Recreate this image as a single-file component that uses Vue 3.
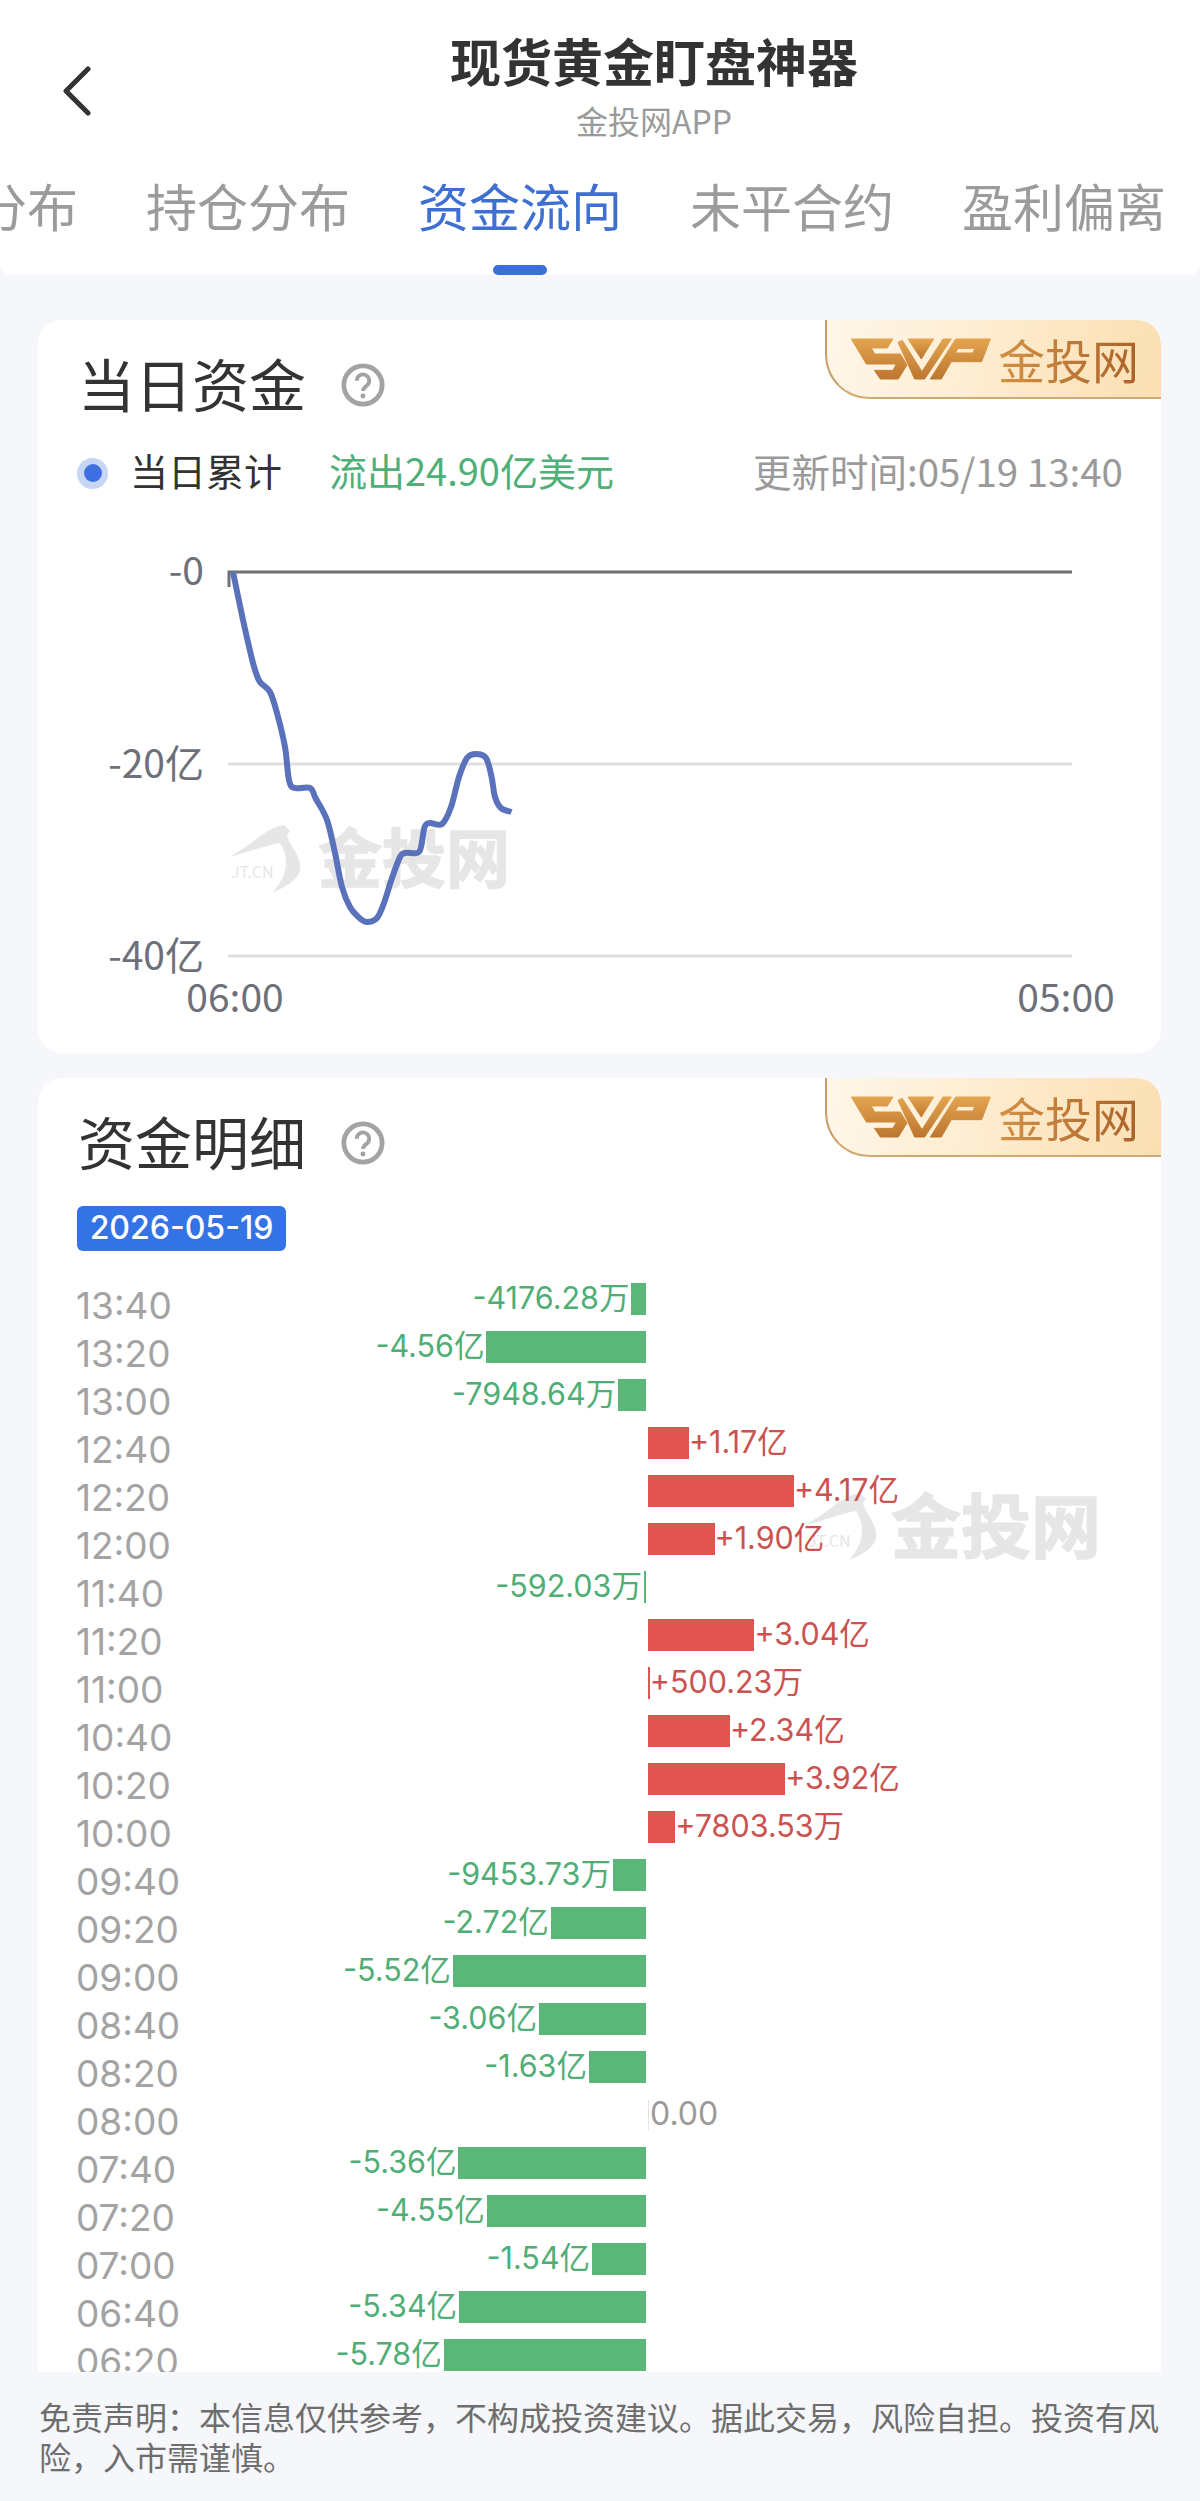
<script setup>
import { computed } from 'vue';

const tabs = [
  { name: '分布' },
  { name: '持仓分布' },
  { name: '资金流向', active: true },
  { name: '未平合约' },
  { name: '盈利偏离' },
];

const flowRows = [
  ['13:40', -4176.28, '万'], ['13:20', -4.56, '亿'], ['13:00', -7948.64, '万'],
  ['12:40', 1.17, '亿'], ['12:20', 4.17, '亿'], ['12:00', 1.9, '亿'],
  ['11:40', -592.03, '万'], ['11:20', 3.04, '亿'], ['11:00', 500.23, '万'],
  ['10:40', 2.34, '亿'], ['10:20', 3.92, '亿'], ['10:00', 7803.53, '万'],
  ['09:40', -9453.73, '万'], ['09:20', -2.72, '亿'], ['09:00', -5.52, '亿'],
  ['08:40', -3.06, '亿'], ['08:20', -1.63, '亿'], ['08:00', 0, ''],
  ['07:40', -5.36, '亿'], ['07:20', -4.55, '亿'], ['07:00', -1.54, '亿'],
  ['06:40', -5.34, '亿'], ['06:20', -5.78, '亿'],
];

// 35px per 亿
const rows = computed(() => flowRows.map(([time, val, unit]) => {
  const yi = unit === '万' ? val / 10000 : val;
  const sign = val > 0 ? '+' : '';
  return {
    time,
    val,
    width: Math.abs(yi) * 35,
    label: val === 0 ? '0.00' : `${sign}${val.toFixed(2)}${unit}`,
  };
}));

const points = [
  [233, 572], [243, 620], [251, 655], [255, 670], [260, 682], [270, 692], [277, 713], [285, 747],
  [289, 780], [294.5, 788], [310, 788], [315.5, 798], [327, 820], [335, 853], [342, 887],
  [350, 907], [359.5, 918], [367, 922], [377, 918], [384, 903], [392, 878], [400, 857],
  [405.5, 853], [417, 853], [421, 847], [424.6, 827], [430, 823], [442, 824], [451, 807],
  [459, 777], [467, 758], [476, 754], [486, 758], [491.6, 777], [495, 797], [501, 808], [511.5, 812],
];

const linePath = computed(() => {
  let d = `M${points[0][0]} ${points[0][1]}`;
  for (let i = 0; i < points.length - 1; i++) {
    const p0 = points[i - 1] || points[i];
    const p1 = points[i];
    const p2 = points[i + 1];
    const p3 = points[i + 2] || p2;
    const c1x = p1[0] + (p2[0] - p0[0]) / 6;
    const c1y = p1[1] + (p2[1] - p0[1]) / 6;
    const c2x = p2[0] - (p3[0] - p1[0]) / 6;
    const c2y = p2[1] - (p3[1] - p1[1]) / 6;
    d += ` C${c1x.toFixed(1)} ${c1y.toFixed(1)} ${c2x.toFixed(1)} ${c2y.toFixed(1)} ${p2[0]} ${p2[1]}`;
  }
  return d;
});
</script>

<template>
  <div class="page">
    <header class="header">
      <div class="head-row">
        <div class="back">
          <svg width="30" height="50" viewBox="0 0 30 50">
            <path d="M26 3 L4 25 L26 47" fill="none" stroke="#333" stroke-width="5" stroke-linecap="round" stroke-linejoin="round" />
          </svg>
        </div>
        <div class="head-title">
          <div class="title">现货黄金盯盘神器</div>
          <div class="subtitle">金投网APP</div>
        </div>
      </div>
      <nav class="tabs">
        <div v-for="t in tabs" :key="t.name" class="tab" :class="{ active: t.active }">
          {{ t.name }}
          <i v-if="t.active" class="tab-bar"></i>
        </div>
      </nav>
    </header>

    <main class="main">
      <section class="card day-card">
        <div class="svip">
          <svg class="svp" width="155" height="60" viewBox="0 0 465 180">
            <defs>
              <linearGradient id="svpGold" x1="0" y1="0" x2="0" y2="1">
                <stop offset="0" stop-color="#e3a44e" />
                <stop offset="1" stop-color="#bd7630" />
              </linearGradient>
            </defs>
            <g fill="url(#svpGold)" stroke="url(#svpGold)" stroke-width="3">
              <path d="M25 30 L150 30 L133 57 L85 57 L95 75 L172 75 L192 108 L166 150 L112 150 L94 124 L150 124 L160 105 L70 105 Z" />
              <path d="M195 30 L272 30 L235 90 Z" />
              <path d="M165 40 L178 34 L237 128 L300 30 L325 30 L245 150 L215 150 Z" />
              <path fill-rule="evenodd" d="M338 30 L442 30 L416 98 L325 98 L295 150 L262 150 Z M345 58 L395 58 L390 72 L337 72 Z" />
            </g>
          </svg>
          <span class="svip-text">金投网</span>
        </div>
        <div class="card-title">
          <h2>当日资金</h2>
          <svg class="help" width="44" height="44" viewBox="0 0 46 46">
            <circle cx="23" cy="23" r="20" fill="none" stroke="#a3a3a3" stroke-width="5" />
            <path d="M16.5 18.5a6.5 6.5 0 1 1 10.4 5.2c-2.4 1.8-3.9 2.8-3.9 5.6" fill="none" stroke="#a3a3a3" stroke-width="4" />
            <circle cx="23" cy="34.5" r="2.6" fill="#a3a3a3" />
          </svg>
        </div>
        <div class="legend">
          <span class="dot"><i></i></span>
          <span class="legend-name">当日累计</span>
          <span class="legend-val">流出24.90亿美元</span>
          <span class="legend-time">更新时间:05/19 13:40</span>
        </div>
        <svg class="chart" width="1123" height="533" viewBox="38 520 1123 533">
          <g fill="#e6e6e6">
            <path transform="translate(227 825)" d="M57 0 C40 2 25 20 2 32 C20 28 40 20 53 18 C62 30 62 50 46 67 C65 60 75 50 73 40 C72 28 62 20 60 10 L63 6 Z" />
            <text x="231" y="878" class="wm-small">JT.CN</text>
            <text x="318" y="882" class="wm-text">金投网</text>
          </g>
          <line x1="228" y1="764" x2="1072" y2="764" stroke="#e0e0e0" stroke-width="3" />
          <line x1="228" y1="956" x2="1072" y2="956" stroke="#e0e0e0" stroke-width="3" />
          <path d="M229 587 V572 H1072" fill="none" stroke="#6e7074" stroke-width="3" />
          <path :d="linePath" fill="none" stroke="#5a72bc" stroke-width="6" stroke-linejoin="round" />
          <g class="axis-y" text-anchor="end">
            <text x="204" y="585">-0</text>
            <text x="204" y="778">-20亿</text>
            <text x="204" y="970">-40亿</text>
          </g>
          <g class="axis-x" text-anchor="middle">
            <text x="235" y="1012">06:00</text>
            <text x="1066" y="1012">05:00</text>
          </g>
        </svg>
      </section>

      <section class="card flow-card">
        <div class="svip">
          <svg class="svp" width="155" height="60" viewBox="0 0 465 180">
            <g fill="url(#svpGold)" stroke="url(#svpGold)" stroke-width="3">
              <path d="M25 30 L150 30 L133 57 L85 57 L95 75 L172 75 L192 108 L166 150 L112 150 L94 124 L150 124 L160 105 L70 105 Z" />
              <path d="M195 30 L272 30 L235 90 Z" />
              <path d="M165 40 L178 34 L237 128 L300 30 L325 30 L245 150 L215 150 Z" />
              <path fill-rule="evenodd" d="M338 30 L442 30 L416 98 L325 98 L295 150 L262 150 Z M345 58 L395 58 L390 72 L337 72 Z" />
            </g>
          </svg>
          <span class="svip-text">金投网</span>
        </div>
        <div class="card-title">
          <h2>资金明细</h2>
          <svg class="help" width="44" height="44" viewBox="0 0 46 46">
            <circle cx="23" cy="23" r="20" fill="none" stroke="#a3a3a3" stroke-width="5" />
            <path d="M16.5 18.5a6.5 6.5 0 1 1 10.4 5.2c-2.4 1.8-3.9 2.8-3.9 5.6" fill="none" stroke="#a3a3a3" stroke-width="4" />
            <circle cx="23" cy="34.5" r="2.6" fill="#a3a3a3" />
          </svg>
        </div>
        <div class="date-tag">2026-05-19</div>
        <div class="flow">
          <svg class="flow-wm" width="310" height="80" viewBox="0 0 310 80">
            <g fill="#e6e6e6">
              <path transform="translate(3 6)" d="M57 0 C40 2 25 20 2 32 C20 28 40 20 53 18 C62 30 62 50 46 67 C65 60 75 50 73 40 C72 28 62 20 60 10 L63 6 Z" />
              <text x="8" y="60" class="wm-small">JT.CN</text>
              <text x="91" y="66" class="wm-text big">金投网</text>
            </g>
          </svg>
          <div v-for="r in rows" :key="r.time" class="row">
            <span class="time">{{ r.time }}</span>
            <div class="side neg">
              <template v-if="r.val < 0">
                <span class="amount down">{{ r.label }}</span>
                <i class="bar down" :style="{ width: r.width + 'px' }"></i>
              </template>
            </div>
            <div class="side pos">
              <template v-if="r.val > 0">
                <i class="bar up" :style="{ width: r.width + 'px' }"></i>
                <span class="amount up">{{ r.label }}</span>
              </template>
              <template v-else-if="r.val === 0">
                <i class="bar zero"></i>
                <span class="amount none">{{ r.label }}</span>
              </template>
            </div>
          </div>
        </div>
      </section>
    </main>

    <footer class="footer">免责声明：本信息仅供参考，不构成投资建议。据此交易，风险自担。投资有风险，入市需谨慎。</footer>
  </div>
</template>

<style>
html, body {
  margin: 0;
  background: #f5f7fb;
}
</style>

<style scoped>
.page {
  width: 1200px;
  height: 2501px;
  display: flex;
  flex-direction: column;
  overflow: hidden;
  background: #f5f7fb;
  font-family: "Noto Sans CJK SC", "Noto Sans", sans-serif;
  color: #333;
}

.header {
  flex: none;
  height: 275px;
  box-sizing: border-box;
  background: #fff;
  border-radius: 0 0 12px 12px;
  padding-top: 30px;
  overflow: hidden;
}
.head-row {
  display: flex;
  height: 109px;
}
.back {
  width: 108px;
  box-sizing: border-box;
  padding: 36px 0 0 62px;
}
.back svg {
  display: block;
}
.head-title {
  flex: 1;
  text-align: center;
}
.title {
  font-size: 51px;
  line-height: 60px;
  font-weight: 700;
  color: #333;
}
.subtitle {
  margin-top: 10px;
  font-size: 32px;
  line-height: 40px;
  color: #9a9a9a;
}
.tabs {
  display: flex;
  gap: 68px;
  margin: 31px 0 0 -24px;
  white-space: nowrap;
}
.tab {
  position: relative;
  height: 105px;
  line-height: 70px;
  font-size: 51px;
  color: #9b9b9b;
}
.tab.active {
  color: #3f6fd0;
}
.tab-bar {
  position: absolute;
  left: 50%;
  bottom: 0;
  width: 54px;
  height: 10px;
  margin-left: -27px;
  border-radius: 5px;
  background: #3b6fdc;
}

.main {
  flex: 1;
  min-height: 0;
  overflow: hidden;
  padding: 45px 39px 0 38px;
}
.card {
  position: relative;
  background: #fff;
  border-radius: 24px;
  overflow: hidden;
}
.day-card {
  height: 733px;
}
.flow-card {
  margin-top: 25px;
  padding-bottom: 40px;
  border-radius: 24px 24px 0 0;
}

.svip {
  position: absolute;
  top: 0;
  right: 0;
  width: 336px;
  height: 79px;
  box-sizing: border-box;
  border-left: 2px solid #c99f6c;
  border-bottom: 2px solid #d2a973;
  border-radius: 0 24px 0 44px;
  background: linear-gradient(100deg, #fff7ea 0%, #fde9c8 60%, #fbdfb2 100%);
  display: flex;
  align-items: center;
}
.svp {
  flex: none;
  margin-left: 16px;
}
.svip-text {
  font-size: 47px;
  line-height: 60px;
  background: linear-gradient(90deg, #d39145, #aa6229);
  -webkit-background-clip: text;
  background-clip: text;
  color: transparent;
}

.card-title {
  display: flex;
  align-items: center;
  height: 66px;
  padding: 32px 0 0 40px;
}
.card-title h2 {
  margin: 0 0 6px;
  font-size: 57px;
  line-height: 60px;
  font-weight: 400;
  color: #333;
}
.help {
  margin-left: 35px;
}

.legend {
  display: flex;
  align-items: center;
  height: 50px;
  margin-top: 30px;
  padding: 0 38px 0 39px;
  font-size: 38px;
  line-height: 44px;
}
.legend span:not(.dot) {
  margin-bottom: 6px;
}
.dot {
  width: 31px;
  height: 31px;
  border-radius: 50%;
  background: #c8d6f6;
  display: flex;
  align-items: center;
  justify-content: center;
}
.dot i {
  width: 18px;
  height: 18px;
  border-radius: 50%;
  background: #3f6fe0;
}
.legend-name {
  margin-left: 22px;
  color: #333;
}
.legend-val {
  margin-left: 47px;
  color: #4fb077;
}
.legend-time {
  margin-left: auto;
  font-size: 38.5px;
  color: #9a9a9a;
}

.chart {
  display: block;
  margin-top: 22px;
}
.axis-y text,
.axis-x text {
  font-size: 39px;
  fill: #6e7079;
}
.wm-small {
  font-size: 16px;
}
.wm-text {
  font-size: 64px;
  font-weight: 700;
  stroke: #e6e6e6;
  stroke-width: 1.5px;
}
.wm-text.big {
  font-size: 70px;
}

.date-tag {
  width: 209px;
  height: 45px;
  margin: 30px 0 0 39px;
  border-radius: 6px;
  background: #3473e6;
  color: #fff;
  font-family: Inter, "Noto Sans CJK SC", sans-serif;
  font-size: 32px;
  font-weight: 500;
  line-height: 44px;
  text-align: center;
}

.flow {
  position: relative;
  margin-top: 24px;
}
.flow-wm {
  position: absolute;
  left: 762px;
  top: 212px;
}
.row {
  position: relative;
  display: flex;
  height: 48px;
}
.time {
  flex: none;
  width: 159px;
  box-sizing: border-box;
  padding-left: 38px;
  height: 48px;
  line-height: 62px;
  font-family: Inter, "Noto Sans CJK SC", sans-serif;
  font-size: 37px;
  color: #a3a3a3;
}
.side {
  display: flex;
  align-items: center;
  height: 48px;
}
.side.neg {
  width: 449px;
  justify-content: flex-end;
}
.side.pos {
  margin-left: 2px;
}
.bar {
  display: block;
  height: 32px;
}
.bar.down {
  background: #5ab778;
  margin-left: 2px;
}
.bar.up {
  background: #e25450;
  margin-right: 0;
}
.bar.zero {
  width: 1px;
  height: 32px;
  margin-right: 1px;
  background: #e4e4e4;
}
.amount {
  font-family: Inter, "Noto Sans CJK SC", sans-serif;
  font-size: 30.5px;
  line-height: 46px;
  margin-bottom: 2px;
  white-space: nowrap;
}
.amount.down {
  color: #4fae76;
}
.amount.up {
  color: #cc5250;
}
.amount.none {
  font-size: 32px;
  color: #9a9a9a;
}

.footer {
  flex: none;
  height: 129px;
  box-sizing: border-box;
  padding: 24px 39px 0;
  background: #f5f7fa;
  font-size: 32px;
  line-height: 40px;
  color: #6e6e6e;
}
</style>
